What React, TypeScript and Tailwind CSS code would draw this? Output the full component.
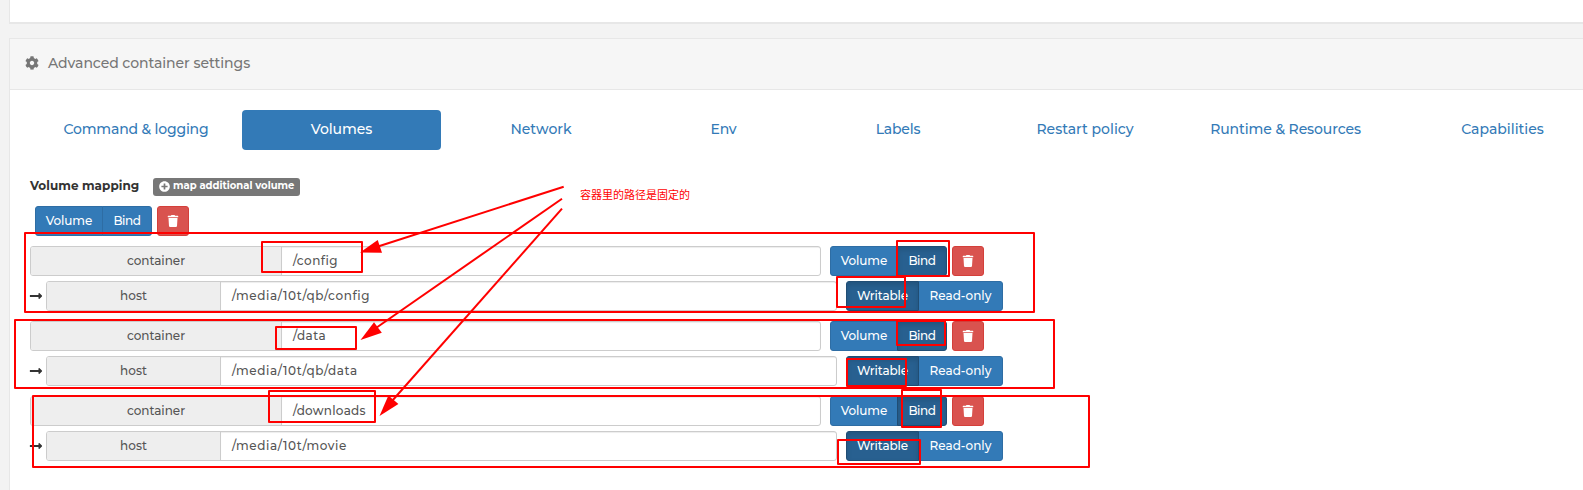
import type { ReactNode } from 'react';
import { FaCog, FaLongArrowAltRight, FaPlusCircle, FaTrash } from 'react-icons/fa';

const tabs = [
  { label: 'Command & logging', cell: 'w-[212px] tracking-[-0.18px]' },
  { label: 'Volumes', cell: 'w-[199px] tracking-[-0.05px]', active: true },
  { label: 'Network', cell: 'w-[200px]' },
  { label: 'Env', cell: 'w-[165px] tracking-[-0.2px]' },
  { label: 'Labels', cell: 'w-[184px] tracking-[-0.2px]' },
  { label: 'Restart policy', cell: 'w-[190px]' },
  { label: 'Runtime & Resources', cell: 'w-[211px] tracking-[-0.1px]' },
  { label: 'Capabilities', cell: 'w-[223px]' },
];

const mappings = [
  { container: '/config', tracking: 'tracking-[0.45px]', host: '/media/10t/qb/config' },
  { container: '/data', tracking: 'tracking-[0.5px]', host: '/media/10t/qb/data' },
  { container: '/downloads', tracking: 'tracking-[0.25px]', host: '/media/10t/movie' },
];

const boxes = [
  [25, 233, 1009, 79],
  [15, 320, 1039, 68],
  [33, 396, 1056, 71],
  [262, 242, 100, 30],
  [276, 327, 80, 22],
  [269, 391, 106, 31],
  [897, 241, 52, 35],
  [837, 277, 68, 30],
  [897, 321, 48, 24],
  [847, 359, 59, 27],
  [902, 390, 39, 37],
  [838, 440, 82, 24],
];

const arrows = [
  { line: 'M563.7 186.7 378 246.5', head: '360,252.5 377.7,240 382,252.8' },
  { line: 'M562 198.7 376 328', head: '360.5,340 374,322.3 381.8,332.8' },
  { line: 'M562 208.7 392 401', head: '379.5,416 388.4,395.5 398.4,404' },
];

function Button({ className, active, children }: { className: string; active?: boolean; children: ReactNode }) {
  const tone = active
    ? 'border-[#204d74] bg-[#286090] shadow-[inset_0_3px_5px_rgba(0,0,0,0.125)]'
    : 'border-[#2e6da4] bg-[#337ab7]';
  return (
    <button className={`flex h-[30px] items-center justify-center border pb-px text-white ${tone} ${className}`}>
      {children}
    </button>
  );
}

function TypeButtons({ bound }: { bound?: boolean }) {
  return (
    <div className="flex">
      <div className="flex">
        <Button className="w-[68px] rounded-l-[3px] tracking-[-0.1px]">Volume</Button>
        <Button className="-ml-px w-[50px] rounded-r-[3px] tracking-[-0.4px]" active={bound}>Bind</Button>
      </div>
      <button className="ml-[5px] flex h-[30px] w-8 items-center justify-center rounded-[3px] border border-[#d43f3a] bg-[#d9534f] text-white">
        <FaTrash className="size-3" />
      </button>
    </div>
  );
}

type FieldProps = { label: string; value: string; tracking: string; addon: string };

function Field({ label, value, tracking, addon }: FieldProps) {
  return (
    <div className="flex h-[30px] w-[791px] overflow-hidden rounded-[3px] border border-[#ccc] text-[#555]">
      <div className={`flex shrink-0 items-center justify-center border-r border-[#ccc] bg-[#eee] pb-px ${addon}`}>
        {label}
      </div>
      <div className={`flex flex-1 items-center pb-px pl-[11px] shadow-[inset_0_1px_1px_rgba(0,0,0,0.075)] ${tracking}`}>
        {value}
      </div>
    </div>
  );
}

export default function App() {
  return (
    <div className="relative h-[490px] w-[1583px] overflow-hidden bg-[#f3f3f3] font-['Montserrat',Inter,sans-serif] text-xs font-medium text-[#333]">
      <section className="ml-[9px] h-6 w-[1600px] border-b-2 border-l border-[#e7e7e7] bg-white" />
      <section className="mt-3.5 ml-[9px] h-[500px] w-[1610px] border border-[#e7e7e7] bg-white">
        <header className="flex h-[51px] items-center border-b border-[#e7e7e7] bg-[#f6f6f6] pb-0.5 pl-[15px] text-sm tracking-[-0.06px] text-[#767676]">
          <FaCog className="mr-[9px] size-3.5" />
          <span className="pb-px">Advanced container settings</span>
        </header>

        <nav className="mt-5 ml-5 flex text-sm text-[#337ab7]">
          {tabs.map((tab) => (
            <a
              key={tab.label}
              className={`flex h-10 shrink-0 items-center justify-center rounded pb-0.5 ${tab.cell} ${tab.active ? 'bg-[#337ab7] text-white' : ''}`}
            >
              {tab.label}
            </a>
          ))}
        </nav>

        <div className="ml-5">
          <div className="flex h-[56px] items-center pt-[17px]">
            <span className="w-[123px] pb-0.5 font-bold tracking-[0.05px]">Volume mapping</span>
            <span className="flex h-[18px] w-[147px] items-center rounded-[3px] bg-[#777] pb-px pl-1.5 text-[10px] font-bold whitespace-nowrap text-white">
              <FaPlusCircle className="mr-[3px] size-[11px]" />
              map additional volume
            </span>
          </div>

          <div className="ml-[5px]">
            <TypeButtons />
          </div>

          <div className="mt-2.5 flex flex-col gap-2.5">
            {mappings.map((m) => (
              <div key={m.container} className="flex flex-col gap-[5px]">
                <div className="flex gap-[9px]">
                  <Field label="container" value={m.container} tracking={m.tracking} addon="w-[251px]" />
                  <TypeButtons bound />
                </div>
                <div className="flex items-center">
                  <FaLongArrowAltRight className="mr-[3px] -ml-px size-3.5 shrink-0" />
                  <Field label="host" value={m.host} tracking="tracking-[0.61px]" addon="w-[174px]" />
                  <div className="ml-[9px] flex">
                    <Button className="z-10 w-[73px] rounded-l-[3px] tracking-[-0.1px]" active>Writable</Button>
                    <Button className="-ml-px w-[85px] rounded-r-[3px]">Read-only</Button>
                  </div>
                </div>
              </div>
            ))}
          </div>
        </div>
      </section>

      <svg className="pointer-events-none absolute inset-0 z-20 h-[490px] w-[1583px]" viewBox="0 0 1583 490" fill="none" stroke="#f00" strokeWidth="2">
        {boxes.map(([x, y, w, h]) => (
          <rect key={`${x}-${y}`} x={x} y={y} width={w} height={h} strokeLinejoin="round" />
        ))}
        {arrows.map((a) => (
          <g key={a.head}>
            <path d={a.line} strokeWidth="2" />
            <polygon points={a.head} fill="#f00" stroke="none" />
          </g>
        ))}
      </svg>
      <span className="absolute top-[186px] left-[580px] z-20 font-['Noto_Sans_CJK_SC',sans-serif] text-[11px] leading-4 font-normal whitespace-nowrap text-[#f00]">
        容器里的路径是固定的
      </span>
    </div>
  );
}
